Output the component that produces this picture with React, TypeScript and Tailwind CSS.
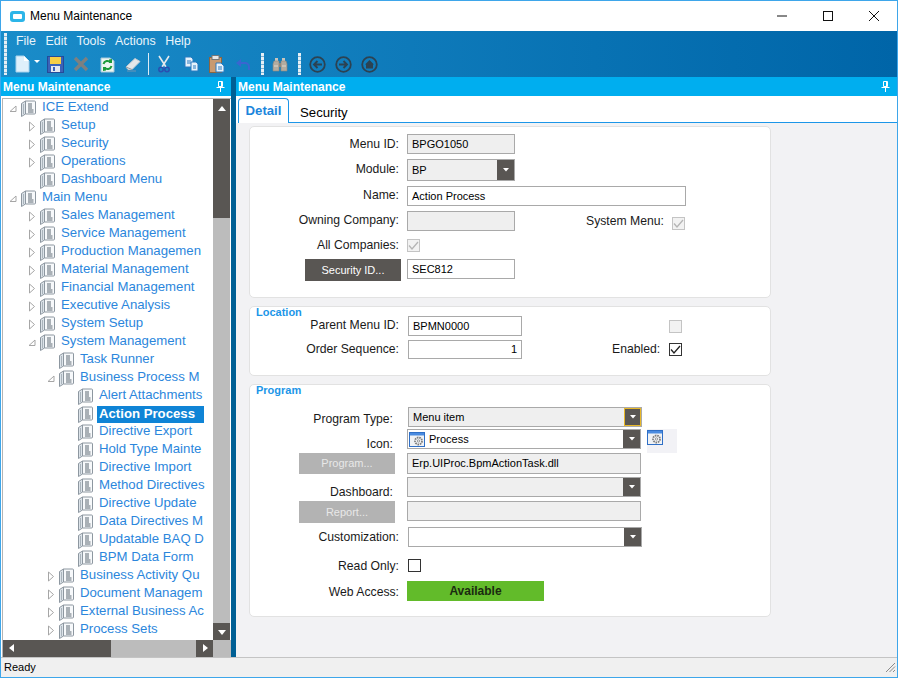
import type { ReactNode } from "react";

const tree: [number, string, string][] = [
  [0, "open", "ICE Extend"],
  [1, "closed", "Setup"],
  [1, "closed", "Security"],
  [1, "closed", "Operations"],
  [1, "", "Dashboard Menu"],
  [0, "open", "Main Menu"],
  [1, "closed", "Sales Management"],
  [1, "closed", "Service Management"],
  [1, "closed", "Production Managemen"],
  [1, "closed", "Material Management"],
  [1, "closed", "Financial Management"],
  [1, "closed", "Executive Analysis"],
  [1, "closed", "System Setup"],
  [1, "open", "System Management"],
  [2, "", "Task Runner"],
  [2, "open", "Business Process M"],
  [3, "", "Alert Attachments"],
  [3, "", "Action Process"],
  [3, "", "Directive Export"],
  [3, "", "Hold Type Mainte"],
  [3, "", "Directive Import"],
  [3, "", "Method Directives"],
  [3, "", "Directive Update"],
  [3, "", "Data Directives M"],
  [3, "", "Updatable BAQ D"],
  [3, "", "BPM Data Form"],
  [2, "closed", "Business Activity Qu"],
  [2, "closed", "Document Managem"],
  [2, "closed", "External Business Ac"],
  [2, "closed", "Process Sets"],
];

const indent = ["pl-[6px]", "pl-[25px]", "pl-[44px]", "pl-[63px]"];

const BookIcon = () => (
  <svg width="15" height="17" viewBox="0 0 15 17" className="shrink-0">
    <path d="M.5 3.500 4.500 1v13l-4 2.500z" fill="#dce3e9" stroke="#8d97a0" />
    <path d="M4.500 1h9a1 1 0 0 1 1 1v11a1 1 0 0 1-1 1h-9z" fill="#f7f9fb" stroke="#8d97a0" />
    <path d="M2.500 4v10" stroke="#aab4bc" />
    <path d="M7 4h4M7 6h4M7 8h4M7 10h5.500M7 12h5.500" stroke="#5d6872" />
  </svg>
);

const Expander = ({ kind }: { kind: string }) => (
  <span className="w-[12px] h-[14px] shrink-0 flex items-center">
    {kind === "closed" && (
      <svg width="8" height="11" viewBox="0 0 8 11"><path d="M1.500 1v9l5-4.500z" fill="#fff" stroke="#a6a6a6" /></svg>
    )}
    {kind === "open" && (
      <svg width="8" height="9" viewBox="0 0 8 9"><path d="M7 2v5.500H1z" fill="#fff" stroke="#a6a6a6" /></svg>
    )}
  </span>
);

const Arrow = ({ dir }: { dir: string }) => {
  const d: Record<string, string> = { up: "M4 2l4 5H0z", down: "M0 3h8L4 8z", left: "M6 0v8L1 4z", right: "M2 0v8l5-4z" };
  return <svg width="8" height="9" viewBox="0 0 8 9"><path d={d[dir]} fill="#fff" /></svg>;
};

const Pin = () => (
  <svg width="9" height="11" viewBox="0 0 9 11">
    <path d="M2.500.5h4v5h-4zM.5 6.500h8M4.500 6.500V11M5.500 1v4" stroke="#fff" fill="none" />
  </svg>
);

const Grip = ({ className = "" }: { className?: string }) => (
  <div className={`w-[3px] bg-[repeating-linear-gradient(#e6eff5_0_3px,#7fb2d2_3px_4px)] ${className}`} />
);

const tools: Record<string, ReactNode> = {
  newDoc: (
    <svg width="15" height="18" viewBox="0 0 15 18">
      <path d="M1 1h8l5 5v11H1z" fill="#dff0fb" stroke="#a8d2ec" />
      <path d="M9 1v5h5z" fill="#fff" />
    </svg>
  ),
  save: (
    <svg width="17" height="17" viewBox="0 0 17 17">
      <rect x="0.500" y="0.500" width="16" height="16" fill="#3c63b8" stroke="#254a99" />
      <rect x="3" y="1" width="11" height="7" fill="#f6cf45" />
      <rect x="4" y="10" width="9" height="6" fill="#e4e8f0" />
      <rect x="6" y="11" width="2" height="4" fill="#3c63b8" />
    </svg>
  ),
  del: (
    <svg width="16" height="16" viewBox="0 0 16 16">
      <path d="M2 2l12 12M14 2 2 14" stroke="#7d8080" strokeWidth="3.400" />
    </svg>
  ),
  refresh: (
    <svg width="15" height="17" viewBox="0 0 15 17">
      <path d="M1 2h9l4 3v11H1z" fill="#eef6f2" stroke="#a8c8d8" />
      <path d="M3.500 8a4 4 0 0 1 7-1.500M11.500 10a4 4 0 0 1-7 1.500" stroke="#1d9b3b" strokeWidth="2" fill="none" />
      <path d="M9 3.500l3-.5v4h-3zM6 14.500l-3 .5v-4h3z" fill="#1d9b3b" />
    </svg>
  ),
  erase: (
    <svg width="16" height="15" viewBox="0 0 16 15">
      <path d="M1 10 10 1.500l5 3-8 8H3z" fill="#e4e7ea" stroke="#c6ccd2" />
      <path d="M1 10l6 2.500" stroke="#8f979e" />
      <path d="M2 14h9" stroke="#6d93b4" />
    </svg>
  ),
  cut: (
    <svg width="12" height="18" viewBox="0 0 12 18">
      <path d="M1 1l7 11M11 1 4 12" stroke="#e6e9ec" strokeWidth="1.600" />
      <circle cx="3" cy="14.500" r="2.200" fill="none" stroke="#2a4fb0" strokeWidth="1.500" />
      <circle cx="9" cy="14.500" r="2.200" fill="none" stroke="#2a4fb0" strokeWidth="1.500" />
    </svg>
  ),
  copy: (
    <svg width="15" height="16" viewBox="0 0 15 16">
      <path d="M1 1h6l2 2v8H1z" fill="#e6f2fb" stroke="#2a7ac0" />
      <path d="M7 6h5l2 2v7H7z" fill="#e6f2fb" stroke="#2a7ac0" />
      <path d="M3 5h4M3 7h4M9 10h3M9 12h3" stroke="#2a7ac0" />
    </svg>
  ),
  paste: (
    <svg width="16" height="18" viewBox="0 0 16 18">
      <rect x="0.500" y="2.500" width="12" height="15" fill="#c89a70" stroke="#8c6540" />
      <rect x="3" y="0.500" width="7" height="4" fill="#e8e8e8" stroke="#777" />
      <path d="M7 8h5l3 3v6H7z" fill="#eaf3fb" stroke="#2a7ac0" />
      <path d="M9 12h4M9 14h4" stroke="#2a7ac0" />
    </svg>
  ),
  undo: (
    <svg width="15" height="13" viewBox="0 0 15 13">
      <path d="M4 5h5a4 4 0 0 1 4 4v3" stroke="#3a66d0" strokeWidth="2" fill="none" />
      <path d="M5 1v8L0 5z" fill="#3a66d0" />
    </svg>
  ),
  find: (
    <svg width="16" height="15" viewBox="0 0 16 15">
      <path d="M3 1h3v3H3zM10 1h3v3h-3z" fill="#c8c4bc" />
      <path d="M2 4h5v10H1V7zM9 4h5l1 3v7H9z" fill="#b3aca0" stroke="#8f887c" strokeWidth="0.600" />
      <path d="M7 6h2v4H7z" fill="#8f887c" />
      <path d="M2 9h4M10 9h4" stroke="#ded9cf" />
    </svg>
  ),
  back: (
    <svg width="17" height="17" viewBox="0 0 17 17">
      <circle cx="8.500" cy="8.500" r="7.300" fill="none" stroke="#2c4252" strokeWidth="1.800" />
      <path d="M13 8.500H5M8.500 5l-3.500 3.500L8.500 12" stroke="#2c4252" strokeWidth="1.900" fill="none" />
    </svg>
  ),
  forward: (
    <svg width="17" height="17" viewBox="0 0 17 17">
      <circle cx="8.500" cy="8.500" r="7.300" fill="none" stroke="#2c4252" strokeWidth="1.800" />
      <path d="M4 8.500h8M8.500 5l3.500 3.500L8.500 12" stroke="#2c4252" strokeWidth="1.900" fill="none" />
    </svg>
  ),
  home: (
    <svg width="17" height="17" viewBox="0 0 17 17">
      <circle cx="8.500" cy="8.500" r="7.300" fill="none" stroke="#2c4252" strokeWidth="1.800" />
      <path d="M8.500 4 13 8.500h-1V12.500H5V8.500H4z" fill="#2c4252" />
    </svg>
  ),
};

const WinIcon = () => (
  <svg width="16" height="15" viewBox="0 0 16 15" className="block">
    <rect x="0.500" y="0.500" width="15" height="14" fill="#f0f2f5" stroke="#2f6fc6" />
    <rect x="1" y="1" width="14" height="2.500" fill="#4a8be0" />
    <circle cx="9.500" cy="9" r="3.500" fill="none" stroke="#7d7d7d" strokeWidth="1.800" strokeDasharray="1.600 0.800" />
    <circle cx="9.500" cy="9" r="1.200" fill="none" stroke="#9a9a9a" />
  </svg>
);

const Combo = ({ value, icon, disabled, focus, className = "" }: { value?: string; icon?: boolean; disabled?: boolean; focus?: boolean; className?: string }) => (
  <div className={`flex items-center border border-[#a9a9a9] ${disabled ? "bg-[#efefef]" : "bg-white"} ${className}`}>
    {icon && <span className="ml-[1px] mr-[4px]"><WinIcon /></span>}
    <span className={`flex-1 text-[11px] text-black ${icon ? "" : "pl-[4px]"}`}>{value}</span>
    <span className={`w-[17px] h-full flex items-center justify-center bg-[#595653] ${focus ? "border border-[#e8b828]" : ""}`}>
      <svg width="6" height="4" viewBox="0 0 6 4"><path d="M0 0h6L3 3.500z" fill="#fff" /></svg>
    </span>
  </div>
);

const Input = ({ value, disabled, className = "" }: { value?: string; disabled?: boolean; className?: string }) => (
  <div className={`flex items-center px-[4px] border border-[#a9a9a9] text-[11px] text-black ${disabled ? "bg-[#efefef]" : "bg-white"} ${className}`}>
    {value}
  </div>
);

const Check = ({ checked, disabled }: { checked?: boolean; disabled?: boolean }) => (
  <div className={`w-[13px] h-[13px] border flex items-center justify-center ${disabled ? "border-[#c4c4c4] bg-[#f2f2f2]" : "border-[#333] bg-white"}`}>
    {checked && (
      <svg width="11" height="9" viewBox="0 0 11 9">
        <path d="M1 4.500 4 8l6-7" fill="none" stroke={disabled ? "#b5b5b5" : "#222"} strokeWidth="1.300" />
      </svg>
    )}
  </div>
);

const Row = ({ label, labelClass = "w-[149px] mr-[1px]", gap = "ml-[7px]", className = "", children }: { label?: string; labelClass?: string; gap?: string; className?: string; children: ReactNode }) => (
  <div className={`flex items-center ${className}`}>
    <div className={`shrink-0 text-right text-[12.200px] text-[#1a1a1a] ${labelClass}`}>{label}</div>
    <div className={`flex items-center h-full ${gap}`}>{children}</div>
  </div>
);

const Panel = ({ title, className = "", children }: { title?: string; className?: string; children: ReactNode }) => (
  <div className={`w-[522px] ml-[13px] bg-white border border-[#e2e2e2] rounded-[5px] ${className}`}>
    {title && <div className="pl-[6px] -mt-[1px] text-[11px] leading-[12px] font-bold text-[#1c96e8]">{title}</div>}
    {children}
  </div>
);

const DarkBtn = ({ label, disabled, className = "" }: { label: string; disabled?: boolean; className?: string }) => (
  <div className={`flex items-center justify-center text-[11px] ${disabled ? "bg-[#b3b3b3] text-[#e8e8e8]" : "bg-[#595653] text-white"} ${className}`}>
    {label}
  </div>
);

export default function App() {
  return (
    <div className="w-[898px] h-[678px] flex flex-col overflow-hidden border border-[#3ea6ea] bg-white font-['Liberation_Sans',Arial,sans-serif]">
      {/* title bar */}
      <div className="h-[30px] shrink-0 flex items-center bg-white">
        <div className="ml-[9px] w-[15px] h-[11px] rounded-[3px] bg-[#2cb5e8] flex items-center justify-center">
          <div className="w-[9px] h-[5px] rounded-[1px] bg-white" />
        </div>
        <span className="ml-[5px] text-[12px] text-black">Menu Maintenance</span>
        <div className="ml-auto flex items-center">
          <svg width="46" height="12" viewBox="0 0 46 12"><path d="M0 6h10" stroke="#111" /></svg>
          <svg width="46" height="12" viewBox="0 0 46 12"><rect x="0.500" y="1.500" width="9" height="9" fill="none" stroke="#111" /></svg>
          <svg width="28" height="12" viewBox="0 0 28 12"><path d="M0 1l10 10M10 1 0 11" stroke="#111" /></svg>
        </div>
      </div>

      {/* menu + toolbar */}
      <div className="h-[46px] shrink-0 bg-gradient-to-r from-[#1a8cc9] to-[#0065a8] flex">
        <Grip className="ml-[3px] mt-[2px] h-[42px]" />
        <div className="flex flex-col ml-[6px]">
          <div className="h-[20px] flex items-center gap-[9.600px] pl-[3px] pt-[1px] text-[12.400px] text-[#e9f4fb]">
            <span>File</span>
            <span>Edit</span>
            <span>Tools</span>
            <span>Actions</span>
            <span>Help</span>
          </div>
          <div className="h-[26px] flex items-center pl-[2px]">
            {tools.newDoc}
            <svg width="6" height="4" viewBox="0 0 6 4" className="ml-[4px] mb-[4px]"><path d="M0 0h6L3 3z" fill="#fff" /></svg>
            <span className="ml-[7px]">{tools.save}</span>
            <span className="ml-[9px]">{tools.del}</span>
            <span className="ml-[11px]">{tools.refresh}</span>
            <span className="ml-[10px]">{tools.erase}</span>
            <div className="ml-[7px] w-[1px] h-[22px] bg-[#dcebf5]" />
            <span className="ml-[9px]">{tools.cut}</span>
            <span className="ml-[14px]">{tools.copy}</span>
            <span className="ml-[10px]">{tools.paste}</span>
            <span className="ml-[11px]">{tools.undo}</span>
            <Grip className="ml-[10px] h-[22px]" />
            <span className="ml-[8px]">{tools.find}</span>
            <Grip className="ml-[10px] h-[22px]" />
            <span className="ml-[8px]">{tools.back}</span>
            <span className="ml-[9px]">{tools.forward}</span>
            <span className="ml-[9px]">{tools.home}</span>
          </div>
        </div>
      </div>

      {/* panes */}
      <div className="flex-1 flex min-h-0">
        {/* left pane */}
        <div className="w-[230px] shrink-0 flex flex-col bg-white">
          <div className="h-[19px] shrink-0 bg-[#00aeef] flex items-center justify-between pl-[2px] pr-[6px]">
            <span className="text-[12px] font-bold text-white">Menu Maintenance</span>
            <Pin />
          </div>
          <div className="flex-1 min-h-0 flex flex-col mt-[2px] border-t border-l border-[#b4b4b4] ml-[1px]">
            <div className="flex-1 min-h-0 flex">
              <div className="w-[210px] overflow-hidden">
                {tree.map(([depth, kind, label]) => (
                  <div key={label} className={`h-[18px] flex items-center ${indent[depth]}`}>
                    <Expander kind={kind} />
                    <BookIcon />
                    {label === "Action Process" ? (
                      <span className="ml-[4px] pl-[2px] w-[107px] h-[17px] flex items-center bg-[#0f84d6] text-white font-bold text-[13.200px] whitespace-nowrap">{label}</span>
                    ) : (
                      <span className="ml-[6px] pb-[2px] text-[13.200px] text-[#2b86dc] whitespace-nowrap">{label}</span>
                    )}
                  </div>
                ))}
              </div>
              <div className="w-[17px] shrink-0 flex flex-col bg-[#bcbcbc]">
                <div className="h-[119px] bg-[#595653] flex justify-center pt-[5px]"><Arrow dir="up" /></div>
                <div className="flex-1" />
                <div className="h-[17px] bg-[#595653] flex items-center justify-center"><Arrow dir="down" /></div>
              </div>
            </div>
            <div className="h-[17px] shrink-0 flex bg-[#bcbcbc]">
              <div className="w-[108px] bg-[#595653] flex items-center pl-[5px]"><Arrow dir="left" /></div>
              <div className="w-[85px]" />
              <div className="w-[17px] bg-[#595653] flex items-center justify-center"><Arrow dir="right" /></div>
            </div>
          </div>
        </div>

        <div className="w-[5px] shrink-0 bg-[#005f94]" />

        {/* right pane */}
        <div className="flex-1 min-w-0 flex flex-col bg-[#f2f2f4]">
          <div className="h-[19px] shrink-0 bg-[#00aeef] flex items-center justify-between pl-[2px] pr-[7px]">
            <span className="text-[12px] font-bold text-white">Menu Maintenance</span>
            <Pin />
          </div>
          <div className="h-[27px] shrink-0 flex items-end bg-white">
            <div className="ml-[2px] w-[51px] h-[25px] flex items-center justify-center rounded-t-[4px] border border-b-0 border-[#1c96e8] text-[13.200px] font-bold text-[#1c86dc]">Detail</div>
            <div className="flex-1 h-[25px] border-b border-[#1c96e8] pl-[11px] pt-[5px] text-[13.200px] text-black">Security</div>
          </div>

          <div className="flex-1 min-h-0 pt-[3px]">
            <Panel className="h-[172px] pt-[7px]">
              <Row label="Menu ID:" className="h-[20px]"><Input value="BPGO1050" disabled className="w-[108px] h-full" /></Row>
              <Row label="Module:" labelClass="w-[149px] mr-[1px] pb-[2px]" className="h-[22px] mt-[5px]"><Combo value="BP" disabled className="w-[108px] h-full" /></Row>
              <Row label="Name:" labelClass="w-[149px] mr-[1px] pb-[2px]" className="h-[20px] mt-[5px]"><Input value="Action Process" className="w-[279px] h-full" /></Row>
              <div className="flex items-center h-[20px] mt-[5px]">
                <Row label="Owning Company:" labelClass="w-[149px] mr-[1px] pb-[2px]" className="h-full"><Input disabled className="w-[108px] h-full" /></Row>
                <span className="ml-[71px] text-[12.200px] text-[#1a1a1a]">System Menu:</span>
                <span className="ml-[8px] mt-[5px]"><Check checked disabled /></span>
              </div>
              <Row label="All Companies:" className="h-[14px] mt-[7px]"><Check checked disabled /></Row>
              <div className="flex items-center h-[22px] mt-[7px]">
                <DarkBtn label="Security ID..." className="ml-[55px] w-[96px] h-full" />
                <Input value="SEC812" className="ml-[6px] w-[108px] h-[20px] self-start" />
              </div>
            </Panel>

            <Panel title="Location" className="h-[70px] mt-[8px]">
              <Row label="Parent Menu ID:" labelClass="w-[149px] mr-[1px] pb-[2px]" gap="ml-[8px]" className="h-[20px] -mt-[2px]">
                <Input value="BPMN0000" className="w-[114px] h-full" />
                <span className="ml-[147px]"><Check disabled /></span>
              </Row>
              <div className="flex items-center h-[19px] mt-[4px]">
                <Row label="Order Sequence:" gap="ml-[8px]" className="h-full">
                  <div className="w-[114px] h-full flex items-center justify-end px-[4px] border border-[#a9a9a9] bg-white text-[11px] text-black">1</div>
                </Row>
                <span className="ml-[90px] text-[12.200px] text-[#1a1a1a]">Enabled:</span>
                <span className="ml-[9px]"><Check checked /></span>
              </div>
            </Panel>

            <Panel title="Program" className="h-[233px] mt-[8px]">
              <Row label="Program Type:" labelClass="w-[143px] mr-[1px] pt-[5px]" gap="ml-[14px]" className="h-[20px] mt-[11px]">
                <Combo value="Menu item" disabled focus className="w-[234px] h-full" />
              </Row>
              <div className="flex items-start h-[24px] mt-[2px]">
                <Row label="Icon:" labelClass="w-[143px] mr-[1px] pt-[10px]" gap="ml-[13px]" className="h-[20px]">
                  <Combo value="Process" icon className="w-[234px] h-full" />
                </Row>
                <div className="ml-[6px] w-[30px] h-[24px] bg-[#f2f2f6] pt-[1px]"><WinIcon /></div>
              </div>
              <div className="flex items-center h-[21px]">
                <DarkBtn label="Program..." disabled className="ml-[49px] w-[96px] h-full" />
                <Input value="Erp.UIProc.BpmActionTask.dll" disabled className="ml-[12px] w-[234px] h-full" />
              </div>
              <Row label="Dashboard:" labelClass="w-[143px] mr-[1px] pt-[10px]" gap="ml-[13px]" className="h-[20px] mt-[3px]">
                <Combo disabled className="w-[234px] h-full" />
              </Row>
              <div className="flex items-start h-[20px] mt-[4px]">
                <DarkBtn label="Report..." disabled className="ml-[49px] w-[96px] h-[22px]" />
                <Input disabled className="ml-[12px] w-[234px] h-full" />
              </div>
              <Row label="Customization:" gap="ml-[8px]" className="h-[20px] mt-[6px]">
                <Combo className="w-[234px] h-full" />
              </Row>
              <Row label="Read Only:" labelClass="w-[149px] mr-[1px] pt-[2px]" gap="ml-[8px]" className="h-[13px] mt-[12px]"><Check /></Row>
              <Row label="Web Access:" labelClass="w-[149px] mr-[1px] pt-[2px]" className="h-[20px] mt-[9px]">
                <div className="w-[137px] h-full flex items-center justify-center bg-[#62bb2a] text-[12px] font-bold text-[#1a2a10]">Available</div>
              </Row>
            </Panel>
          </div>
        </div>
      </div>

      {/* status bar */}
      <div className="h-[20px] shrink-0 flex items-center justify-between bg-[#f0f0f0] border-t border-[#c4c4c4] pl-[3px] pr-[1px] text-[11px] text-black">
        <span>Ready</span>
        <svg width="11" height="11" viewBox="0 0 11 11"><path d="M10 1 1 10M10 4.500 4.500 10M10 8 8 10" stroke="#8a8a8a" /></svg>
      </div>
    </div>
  );
}
